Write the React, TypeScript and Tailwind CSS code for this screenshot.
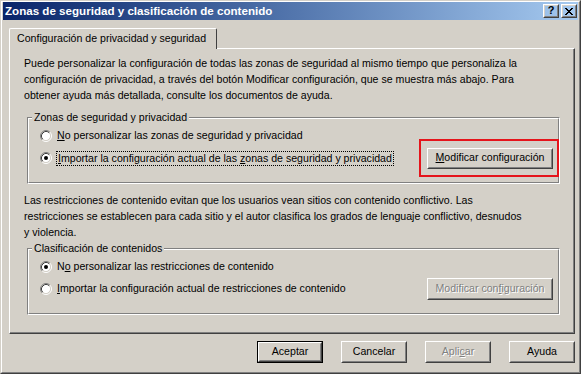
import React from 'react';

const FONT = "font-['Liberation_Sans',Arial,sans-serif]";

const Radio: React.FC<{ checked?: boolean }> = ({ checked }) => (
  <svg width="12" height="12" viewBox="0 0 12 12" className="shrink-0">
    <circle cx="6" cy="6" r="4.5" fill="#fff" />
    <path d="M2.11 9.89 A5.5 5.5 0 0 1 9.89 2.11" stroke="#808080" fill="none" />
    <path d="M9.89 2.11 A5.5 5.5 0 0 1 2.11 9.89" stroke="#fff" fill="none" />
    <path d="M2.82 9.18 A4.5 4.5 0 0 1 9.18 2.82" stroke="#404040" fill="none" />
    <path d="M9.18 2.82 A4.5 4.5 0 0 1 2.82 9.18" stroke="#D4D0C8" fill="none" />
    {checked && <circle cx="6" cy="6" r="2" fill="#000" />}
  </svg>
);

const Face: React.FC<{ disabled?: boolean; children: React.ReactNode }> = ({ disabled, children }) => (
  <div className="h-full border border-t-white border-l-white border-r-[#404040] border-b-[#404040]">
    <div className="h-full flex items-center justify-center border border-t-[#D4D0C8] border-l-[#D4D0C8] border-r-[#808080] border-b-[#808080]">
      <span className={disabled ? 'text-[#808080] [text-shadow:1px_1px_0_#fff]' : ''}>{children}</span>
    </div>
  </div>
);

const Button: React.FC<{ className: string; isDefault?: boolean; disabled?: boolean; children: React.ReactNode }> = ({
  className,
  isDefault,
  disabled,
  children,
}) => (
  <div className={`${className} shrink-0`}>
    {isDefault ? (
      <div className="h-full border border-black">
        <Face>{children}</Face>
      </div>
    ) : (
      <Face disabled={disabled}>{children}</Face>
    )}
  </div>
);

const GroupBox: React.FC<{ title: string; children: React.ReactNode }> = ({ title, children }) => (
  <div className="relative ml-[3px] border border-t-[#808080] border-l-[#808080] border-r-white border-b-white">
    <div className="border border-t-white border-l-white border-r-[#808080] border-b-[#808080] pt-[6px] pb-[13px] pl-[11px] pr-[5px]">
      {children}
    </div>
    <span className="absolute left-[4px] -top-[9px] bg-[#D4D0C8] px-[2px] leading-[16px]">{title}</span>
  </div>
);

const CloseGlyph = () => (
  <svg width="8" height="7" viewBox="0 0 8 7" shapeRendering="crispEdges">
    <path
      fill="#000"
      d="M0 0h2v1H0zM6 0h2v1H6zM1 1h2v1H1zM5 1h2v1H5zM2 2h4v1H2zM3 3h2v1H3zM2 4h4v1H2zM1 5h2v1H1zM5 5h2v1H5zM0 6h2v1H0zM6 6h2v1H6z"
    />
  </svg>
);

export default function App() {
  return (
    <div className={`${FONT} w-[581px] h-[374px] bg-[#D4D0C8] text-[10.6px] text-black select-none`}>
      <div className="h-full border border-t-[#D4D0C8] border-l-[#D4D0C8] border-r-[#404040] border-b-[#404040]">
        <div className="h-full border border-t-white border-l-white border-r-[#808080] border-b-[#808080] px-[1px] pb-[1px]">
          {/* title bar */}
          <div className="h-[18px] flex items-center justify-between pl-[2px] pr-[1px] bg-gradient-to-r from-[#0A246A] to-[#A6CAF0]">
            <span className="font-bold text-white text-[11.6px] leading-none">Zonas de seguridad y clasificación de contenido</span>
            <div className="flex gap-[2px]">
              <div className="w-[16px] h-[14px]">
                <Face>
                  <span className="font-bold text-[11px] leading-none">?</span>
                </Face>
              </div>
              <div className="w-[16px] h-[14px]">
                <Face>
                  <span className="flex">
                    <CloseGlyph />
                  </span>
                </Face>
              </div>
            </div>
          </div>

          {/* tab strip */}
          <div className="mt-[8px] ml-[6px] w-[566px]">
            <div className="relative z-10 -mb-[1px] w-[208px] h-[21px] bg-[#D4D0C8] rounded-tl-[2px] rounded-tr-[2px] border-t border-l border-r border-t-white border-l-white border-r-[#404040] flex items-center pl-[7px]">
              Configuración de privacidad y seguridad
            </div>
            <div className="h-[286px] border border-t-white border-l-white border-r-[#404040] border-b-[#404040]">
              <div className="h-full border-r border-b border-r-[#808080] border-b-[#808080] pl-[14px] pr-[13px] pt-[6px]">
                <p className="leading-[16px] whitespace-nowrap">
                  Puede personalizar la configuración de todas las zonas de seguridad al mismo tiempo que personaliza la
                  <br />
                  configuración de privacidad, a través del botón Modificar configuración, que se muestra más abajo. Para
                  <br />
                  obtener ayuda más detallada, consulte los documentos de ayuda.
                </p>

                <div className="mt-[14px]">
                  <GroupBox title="Zonas de seguridad y privacidad">
                    <div className="flex items-center h-[22px]">
                      <Radio />
                      <span className="ml-[5px]">
                        <u>N</u>o personalizar las zonas de seguridad y privacidad
                      </span>
                    </div>
                    <div className="flex items-center justify-between h-[22px]">
                      <div className="flex items-center">
                        <Radio checked />
                        <span className="ml-[4px] border border-dotted border-black px-px leading-[13px]">
                          <u>I</u>mportar la configuración actual de las <u>z</u>onas de seguridad y privacidad
                        </span>
                      </div>
                      <div className="relative">
                        <Button className="w-[126px] h-[21px]">
                          <u>M</u>odificar configuración
                        </Button>
                        <span className="absolute -left-[8px] -right-[6px] -top-[9px] -bottom-[8px] border-2 border-[#E5141B]" />
                      </div>
                    </div>
                  </GroupBox>
                </div>

                <p className="mt-[8px] leading-[16px] whitespace-nowrap">
                  Las restricciones de contenido evitan que los usuarios vean sitios con contenido conflictivo. Las
                  <br />
                  restricciones se establecen para cada sitio y el autor clasifica los grados de lenguaje conflictivo, desnudos
                  <br />y violencia.
                </p>

                <div className="mt-[8px]">
                  <GroupBox title="Clasificación de contenidos">
                    <div className="flex items-center h-[22px]">
                      <Radio checked />
                      <span className="ml-[5px]">
                        N<u>o</u> personalizar las restricciones de contenido
                      </span>
                    </div>
                    <div className="flex items-center justify-between h-[22px]">
                      <div className="flex items-center">
                        <Radio />
                        <span className="ml-[5px]">
                          <u>I</u>mportar la configuración actual de restricciones de contenido
                        </span>
                      </div>
                      <Button className="w-[126px] h-[22px]" disabled>
                        Modificar con<u>f</u>iguración
                      </Button>
                    </div>
                  </GroupBox>
                </div>
              </div>
            </div>
          </div>

          {/* bottom buttons */}
          <div className="mt-[7px] flex justify-end gap-[18px] pr-[3px]">
            <Button className="w-[66px] h-[22px]" isDefault>
              Aceptar
            </Button>
            <Button className="w-[66px] h-[22px]">Cancelar</Button>
            <Button className="w-[66px] h-[22px]" disabled>
              Apli<u>c</u>ar
            </Button>
            <Button className="w-[66px] h-[22px]">Ayuda</Button>
          </div>
        </div>
      </div>
    </div>
  );
}
